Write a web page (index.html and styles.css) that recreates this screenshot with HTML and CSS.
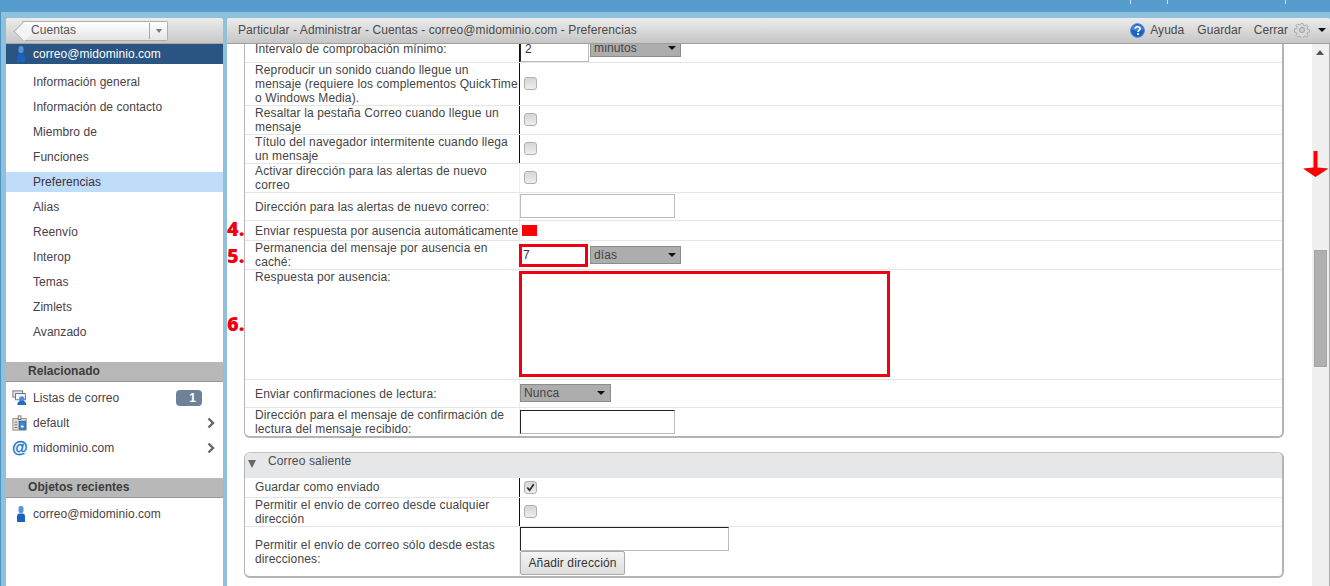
FILE: index.html
```html
<!DOCTYPE html>
<html lang="es">
<head>
<meta charset="utf-8">
<title>Preferencias</title>
<link rel="stylesheet" href="styles.css">
</head>
<body>
<div class="topbar"><i class="tick t1"></i><i class="tick t2"></i><i class="tick t3"></i></div>
<div class="app">
  <aside class="side">
    <div class="side-head">
      <div class="crumb"><span class="crumb-text">Cuentas</span><span class="crumb-drop"><i class="caret-gray"></i></span></div>
    </div>
    <div class="account">
      <svg class="ico-user" viewBox="0 0 12 16"><use href="#user"/></svg>
      <span>correo@midominio.com</span>
    </div>
    <nav class="nav">
      <div class="nav-item">Información general</div>
      <div class="nav-item">Información de contacto</div>
      <div class="nav-item">Miembro de</div>
      <div class="nav-item">Funciones</div>
      <div class="nav-item active">Preferencias</div>
      <div class="nav-item">Alias</div>
      <div class="nav-item">Reenvío</div>
      <div class="nav-item">Interop</div>
      <div class="nav-item">Temas</div>
      <div class="nav-item">Zimlets</div>
      <div class="nav-item">Avanzado</div>
    </nav>
    <h3 class="side-title rel">Relacionado</h3>
    <div class="link-row">
      <svg class="ico-list" viewBox="0 0 18 18">
        <rect x="1" y="1" width="11" height="7" fill="#e4e8ec" stroke="#667"/>
        <rect x="4" y="4" width="11" height="7" fill="#f4f6f8" stroke="#667"/>
        <circle cx="11" cy="10" r="3" fill="#4a90d8"/>
        <path d="M6 17c0-4 2-5 5-5s5 1 5 5z" fill="#1f6cc0"/>
      </svg>
      <span class="link-text">Listas de correo</span><span class="badge">1</span>
    </div>
    <div class="link-row">
      <svg class="ico-list" viewBox="0 0 18 18">
        <rect x="1" y="4" width="15" height="13" fill="#e8ddc8" stroke="#8a8a80"/>
        <rect x="8" y="7" width="7" height="9" fill="#3f88d8" stroke="#1d5ca8"/>
        <rect x="7" y="1" width="3" height="4" fill="#fff" stroke="#667"/>
        <path d="M3 8h3M3 11h3M3 14h3" stroke="#667"/>
        <path d="M10 13h3" stroke="#fff" stroke-width="2"/>
      </svg>
      <span class="link-text">default</span>
      <svg class="chev" viewBox="0 0 8 12"><path d="M1.5 1.5 6 6l-4.500 4.500" fill="none" stroke="#666" stroke-width="2.400"/></svg>
    </div>
    <div class="link-row">
      <span class="at">@</span>
      <span class="link-text">midominio.com</span>
      <svg class="chev" viewBox="0 0 8 12"><path d="M1.5 1.5 6 6l-4.500 4.500" fill="none" stroke="#666" stroke-width="2.400"/></svg>
    </div>
    <h3 class="side-title rec">Objetos recientes</h3>
    <div class="link-row recent">
      <svg class="ico-user" viewBox="0 0 12 16"><use href="#user"/></svg>
      <span class="link-text">correo@midominio.com</span>
    </div>
  </aside>

  <main class="main">
    <header class="main-head">
      <span class="title">Particular - Administrar - Cuentas - correo@midominio.com - Preferencias</span>
      <div class="tools">
        <svg class="ico-help" viewBox="0 0 16 16">
          <circle cx="8" cy="8" r="7.300" fill="#1c62c4" stroke="#3d7ecf"/>
          <path d="M1.500 7a6.500 5 0 0 1 13 0 9 4 0 0 1-13 0z" fill="#5d9be6" opacity=".6"/>
          <path d="M5.600 6.200C5.700 4.600 6.800 4 8.100 4c1.400 0 2.500.8 2.500 2.100 0 1.900-2.100 1.700-2.100 3.500" fill="none" stroke="#fff" stroke-width="1.800"/>
          <rect x="7.500" y="10.800" width="2" height="2" fill="#fff"/>
        </svg>
        <span class="tool t-help">Ayuda</span>
        <span class="tool t-save">Guardar</span>
        <span class="tool t-close">Cerrar</span>
        <svg class="ico-gear" viewBox="0 0 16 16">
          <path d="M6.800 1h2.400l.4 2 1.500.6 1.700-1.100 1.700 1.700-1.100 1.700.6 1.500 2 .4v2.400l-2 .4-.6 1.500 1.100 1.700-1.700 1.700-1.700-1.100-1.500.6-.4 2H6.800l-.4-2-1.500-.6-1.700 1.100-1.700-1.700 1.100-1.700-.6-1.500-2-.4V6.800l2-.4.6-1.500-1.100-1.700 1.700-1.700 1.700 1.100 1.500-.6z" transform="translate(.5 .5) scale(.94)" fill="#d8d8d8" stroke="#a8a8a8"/>
          <circle cx="8" cy="8" r="2.500" fill="#cfcfcf" stroke="#a0a0a0"/>
        </svg>
        <i class="caret-black"></i>
      </div>
    </header>
    <div class="main-body">
      <div class="content">
        <section class="box first">
          <div class="row r-interval">
            <label class="lab">Intervalo de comprobación mínimo:</label>
            <div class="val dark"><span class="field small">2</span><span class="select sel-min">minutos<i class="caret-black"></i></span></div>
          </div>
          <div class="row">
            <label class="lab nowrap">Reproducir un sonido cuando llegue un<br>mensaje (requiere los complementos QuickTime<br>o Windows Media).</label>
            <div class="val dark"><span class="check"></span></div>
          </div>
          <div class="row">
            <label class="lab">Resaltar la pestaña Correo cuando llegue un mensaje</label>
            <div class="val dark"><span class="check"></span></div>
          </div>
          <div class="row">
            <label class="lab">Título del navegador intermitente cuando llega un mensaje</label>
            <div class="val dark"><span class="check"></span></div>
          </div>
          <div class="row">
            <label class="lab">Activar dirección para las alertas de nuevo correo</label>
            <div class="val"><span class="check"></span></div>
          </div>
          <div class="row r-input">
            <label class="lab">Dirección para las alertas de nuevo correo:</label>
            <div class="val"><span class="field alert-field"></span></div>
          </div>
          <div class="row r-single">
            <label class="lab nowrap">Enviar respuesta por ausencia automáticamente</label>
            <div class="val"><span class="red-check"></span></div>
          </div>
          <div class="row">
            <label class="lab">Permanencia del mensaje por ausencia en caché:</label>
            <div class="val"><span class="field small red">7</span><span class="select sel-dias">días<i class="caret-black"></i></span></div>
          </div>
          <div class="row r-area">
            <label class="lab top">Respuesta por ausencia:</label>
            <div class="val top"><span class="area"></span></div>
          </div>
          <div class="row r-input">
            <label class="lab">Enviar confirmaciones de lectura:</label>
            <div class="val"><span class="select sel-nunca">Nunca<i class="caret-black"></i></span></div>
          </div>
          <div class="row last">
            <label class="lab">Dirección para el mensaje de confirmación de lectura del mensaje recibido:</label>
            <div class="val"><span class="field darkfield"></span></div>
          </div>
        </section>

        <section class="box second">
          <div class="box-head"><i class="tri"></i><span>Correo saliente</span></div>
          <div class="row r-single">
            <label class="lab lab-saved">Guardar como enviado</label>
            <div class="val dark"><span class="check on"><svg viewBox="0 0 12 12"><path d="M2.500 6 5 9l4.500-6.500" fill="none" stroke="#333" stroke-width="2"/></svg></span></div>
          </div>
          <div class="row">
            <label class="lab">Permitir el envío de correo desde cualquier dirección</label>
            <div class="val dark"><span class="check"></span></div>
          </div>
          <div class="row last r-addr">
            <label class="lab">Permitir el envío de correo sólo desde estas direcciones:</label>
            <div class="val stack"><span class="field wide darkfield"></span><button class="btn" type="button">Añadir dirección</button></div>
          </div>
        </section>
      </div>
      <div class="scrollbar">
        <i class="scroll-up"></i>
        <div class="thumb"></div>
      </div>
    </div>
    <b class="mark m4">4.</b>
    <b class="mark m5">5.</b>
    <b class="mark m6">6.</b>
    <svg class="arrow" viewBox="0 0 26 26"><path d="M10.500 0h4v16.500l11 1-13 8.500L0 17.500l10.500-1z" fill="#f00"/></svg>
  </main>
</div>
<svg class="defs" width="0" height="0">
  <defs>
    <g id="user">
      <rect x="3.500" y="0" width="5" height="7" rx="2" fill="#5b93d8"/>
      <path d="M2 16V10.500C2 8.500 3 7.500 4.500 7.500h3c1.500 0 2.500 1 2.500 3V16z" fill="#1a62bd"/>
    </g>
  </defs>
</svg>
</body>
</html>
```
FILE: styles.css
```css
* { box-sizing: border-box; }
html, body { margin: 0; height: 586px; overflow: hidden; }
body {
  background: #8fc1da;
  font: 12px/14px "Liberation Sans", Arial, sans-serif;
  color: #444;
  letter-spacing: .05px;
}
.defs { position: absolute; }

.topbar {
  position: relative;
  height: 12px;
  background: #569dce;
}
.tick { position: absolute; top: 0; width: 1px; height: 4px; background: #cfe3f2; }
.t1 { left: 1130px; }
.t2 { left: 1167px; }
.t3 { left: 1285px; }

.app {
  display: flex;
  gap: 4px;
  height: 574px;
  padding: 6px 0 0 5px;
  border-left: 1px solid #4f93c4;
}

/* Sidebar */
.side {
  flex: 0 0 217px;
  background: #fff;
  border-radius: 3px 3px 0 0;
  color: #4a4048;
}
.side-head {
  height: 26px;
  padding: 3px 0 0 7px;
  background: linear-gradient(#ececec, #c8c8c8);
  border-radius: 3px 3px 0 0;
  border-bottom: 1px solid #a8a8a8;
}
.crumb {
  position: relative;
  display: flex;
  align-items: center;
  justify-content: space-between;
  width: 146px;
  height: 20px;
  margin-left: 9px;
  padding: 0 0 2px 9px;
  background: linear-gradient(#fff, #e4e4e4);
  border: 1px solid #b0b0b0;
  border-left: 0;
  border-radius: 0 2px 2px 0;
  color: #555;
  font-size: 12px;
}
.crumb::before {
  content: "";
  position: absolute;
  left: -6px;
  top: 2px;
  width: 14px;
  height: 14px;
  background: #f4f4f4;
  border-left: 1px solid #b0b0b0;
  border-bottom: 1px solid #b0b0b0;
  transform: rotate(45deg) scale(.95);
}
.crumb-text { position: relative; }
.crumb-drop {
  display: flex;
  align-items: center;
  justify-content: center;
  width: 18px;
  height: 16px;
  margin-bottom: -2px;
  border-left: 1px solid #a8a8a8;
}
.caret-gray, .caret-black {
  width: 0;
  height: 0;
  border: 4px solid transparent;
  border-bottom: 0;
  border-top-color: #777;
}
.caret-gray { border-width: 4px 3.5px 0; }
.caret-black { border-top-color: #111; }

.account {
  display: flex;
  align-items: center;
  gap: 6px;
  height: 20px;
  padding-left: 9px;
  background: #2a5482;
  color: #fff;
}
.ico-user { flex: none; width: 12px; height: 16px; display: block; }
.nav { padding-top: 6px; }
.nav-item {
  height: 25px;
  padding: 5px 0 0 27px;
  line-height: 14px;
}
.nav-item.active {
  height: 20px;
  margin-bottom: 5px;
  padding-top: 3px;
  margin-top: 2px;
  background: #bfdcf8;
  color: #40303a;
}
.nav-item.active + .nav-item { margin-top: -2px; }
.side-title {
  height: 20px;
  margin: 0;
  padding: 2px 0 0 22px;
  background: #b8b8b8;
  border-bottom: 1px solid #999;
  color: #3c3c3c;
  font-size: 12px;
  line-height: 15px;
}
.side-title.rel { margin-top: 17px; margin-bottom: 3px; }
.side-title.rec { margin-top: 18px; margin-bottom: 3px; }
.link-row {
  position: relative;
  display: flex;
  align-items: center;
  height: 25px;
  padding-left: 6px;
}
.link-row.recent { padding-left: 9px; }
.link-row.recent .ico-user { margin-right: 6px; }
.ico-list { width: 16px; height: 16px; flex: none; margin-right: 5px; }
.at {
  flex: none;
  width: 16px;
  margin-right: 5px;
  color: #1a78d0;
  font: bold 16px/20px "Liberation Sans", sans-serif;
  -webkit-text-stroke: .3px #1a78d0;
}
.link-text { flex: 1; }
.badge {
  width: 26px;
  height: 16px;
  margin-right: 21px;
  padding-right: 6px;
  background: #6d8299;
  border-radius: 4px;
  color: #fff;
  font-weight: bold;
  line-height: 16px;
  text-align: right;
}
.chev { width: 8px; height: 12px; margin-right: 8px; flex: none; }

/* Main */
.main {
  position: relative;
  flex: 1;
  min-width: 0;
  background: #fff;
  border-radius: 3px 3px 0 0;
  overflow: hidden;
}
.main-head {
  display: flex;
  align-items: center;
  justify-content: space-between;
  height: 26px;
  padding: 0 4px 1px 11px;
  background: linear-gradient(#ececec, #c6c6c6);
  border-bottom: 1px solid #a0a0a0;
  color: #4a4a4a;
  position: relative;
  z-index: 1;
}
.title { letter-spacing: .09px; }
.tools { display: flex; align-items: center; }
.ico-help { width: 15px; height: 15px; margin-right: 5px; }
.t-save { margin-left: 13px; }
.t-close { margin-left: 12px; }
.ico-gear { width: 16px; height: 16px; margin: 0 8px 0 6px; }
.main-body { display: flex; height: 548px; }
.content { flex: none; width: 1085px; padding-left: 17px; }

.box {
  width: 1040px;
  border: 1px solid #aaa;
  border-width: 0 2px 2px 1px;
  border-color: #b4b4b4;
  border-radius: 0 0 6px 6px;
  background: #fff;
  letter-spacing: .13px;
}
.box.first { margin-top: -5px; border-top: 0; }
.box.second {
  margin-top: 14px;
  border-top: 1px solid #c4c4c4;
  border-radius: 6px;
  overflow: hidden;
}
.box-head {
  display: flex;
  align-items: flex-start;
  height: 25px;
  padding: 1px 0 0 3px;
  background: #e6e7e8;
  color: #4c4c4c;
}
.tri {
  margin: 6px 12px 0 0;
  border: 4.500px solid transparent;
  border-bottom: 0;
  border-top: 8px solid #666;
}
.row {
  display: flex;
  border-bottom: 1px solid #e5e5e5;
}
.row.last { border-bottom: 0; }
.lab {
  flex: none;
  width: 274px;
  padding: 0 0 0 10px;
  align-self: center;
}
.lab.nowrap { white-space: nowrap; }
.lab.top { align-self: flex-start; }
.lab-saved { margin-bottom: 2px; }
.val {
  display: flex;
  align-items: center;
  flex: 1;
  border-left: 1px solid #eee;
}
.val.dark { border-left-color: #111; }
.val.top { align-items: flex-start; }
.val.stack { display: block; }
.r-interval { height: 24px; }
.r-interval .lab { margin-bottom: 4px; }
.r-input { min-height: 28px; }
.r-single { height: 20px; }
.r-area { height: 110px; }
.r-addr { height: 49px; }
.r-addr .lab { margin-top: 1px; }

.check {
  display: block;
  width: 13px;
  height: 13px;
  margin: 0 0 2px 4px;
  background: linear-gradient(#d6d6d6, #eee);
  border: 1px solid #b0b0b0;
  border-radius: 3px;
}
.check.on { margin-bottom: 0; }
.check svg { display: block; width: 11px; height: 11px; }
.red-check {
  display: block;
  width: 15px;
  height: 11px;
  margin: 0 0 1px 2px;
  background: #f00;
}
.field {
  display: block;
  width: 155px;
  height: 24px;
  padding: 3px 0 0 4px;
  border: 1px solid #bbb;
  color: #333;
  line-height: 16px;
}
.alert-field { margin-bottom: 2px; }
.field.small { width: 69px; }
.field.red {
  height: 23px;
  margin-left: -1px;
  padding: 0 0 0 1px;
  border: 3px solid #ee0011;
  background: #fff;
  position: relative;
}
.field.wide { width: 209px; }
.darkfield { border-color: #222 #bbb #bbb #222; }
.r-interval .field.small { border-left-color: #222; height: 23px; padding-top: 1px; }
.select {
  display: flex;
  align-items: center;
  justify-content: space-between;
  height: 18px;
  padding: 0 4px 0 3px;
  background: #adadad;
  border: 1px solid #8c8c8c;
  color: #444;
  margin-left: 1px;
}
.sel-min { width: 91px; margin: -5px 0 0 1px; }
.sel-dias { width: 91px; margin-left: 2px; }
.sel-nunca { width: 91px; margin-left: 0; padding-right: 5px; }
.r-input .select { margin-top: -1px; }
.area {
  display: block;
  width: 371px;
  height: 106px;
  margin: 1px 0 0 -1px;
  background: #fff;
  border: 3px solid #ee0011;
  position: relative;
}
.btn {
  display: block;
  width: 105px;
  height: 24px;
  padding: 0;
  background: linear-gradient(#f4f4f4, #dedede);
  border: 1px solid #aaa;
  border-radius: 2px;
  color: #333;
  font: 12px/14px "Liberation Sans", Arial, sans-serif;
  letter-spacing: .13px;
}

/* Scrollbar */
.scrollbar {
  position: relative;
  flex: none;
  width: 18px;
  padding: 0 2px;
  background: #f0f0f0;
  border-right: 1px solid #aaa;
}
.scroll-up {
  display: block;
  width: 0;
  margin: 6px 0 0 2px;
  border: 4px solid transparent;
  border-top: 0;
  border-bottom: 5px solid #555;
}
.thumb {
  width: 13px;
  height: 117px;
  margin-top: 195px;
  background: #b0b0b0;
  border: 1px solid #a4a4a4;
}

/* Annotations over the content */
.mark {
  position: absolute;
  left: 0;
  color: #ee0011;
  font: 800 20px/20px "Open Sans", sans-serif;
  letter-spacing: 0;
  z-index: 2;
}
.m4 { top: 201px; }
.m5 { top: 228px; }
.m6 { top: 296px; }
.arrow {
  position: absolute;
  left: 1076px;
  top: 133px;
  width: 26px;
  height: 26px;
  z-index: 2;
}
```
